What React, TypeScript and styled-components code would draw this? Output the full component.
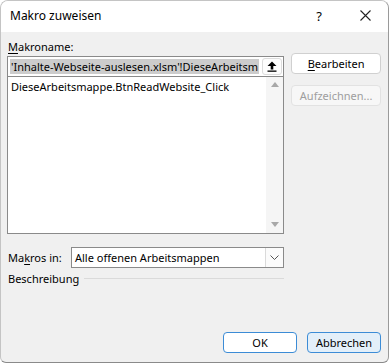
import React from "react";
import styled, { createGlobalStyle } from "styled-components";

const Global = createGlobalStyle`
  html, body { margin: 0; padding: 0; background: #ffffff; }
  body { font-family: "Noto Sans", "Open Sans", sans-serif; font-size: 11px; color: #000; }
  * { box-sizing: border-box; }
`;

const Window = styled.div`
  width: 389px;
  height: 363px;
  display: flex;
  flex-direction: column;
  background: #f0f0f0;
  border: 1px solid #c4c4c4;
  border-right-color: #9a9a9a;
  border-bottom-color: #8a8a8a;
  border-radius: 8px 8px 6px 6px;
  overflow: hidden;
`;

const TitleBar = styled.div`
  height: 31px;
  flex: none;
  display: flex;
  align-items: center;
  background: #ffffff;
  padding-left: 9px;
`;

const Title = styled.div`
  flex: 1;
  font-size: 12px;
  margin-top: -2px;
`;

const TitleButton = styled.div`
  width: 46px;
  height: 31px;
  display: flex;
  align-items: center;
  justify-content: center;
  font-size: 13px;
  margin-top: -2px;
`;

const Body = styled.div`
  flex: 1;
  display: flex;
  flex-direction: column;
  padding: 7px 7px 9px 6px;
`;

const Main = styled.div`
  display: flex;
  gap: 7px;
`;

const LeftCol = styled.div`
  width: 278px;
  display: flex;
  flex-direction: column;
`;

const Mnemonic = styled.span`
  display: inline-block;
  &::first-letter {
    text-decoration: underline;
    text-underline-offset: 2px;
  }
`;

const Label = styled.div`
  height: 16px;
  line-height: 16px;
  padding-left: 1px;
`;

const U = styled.span`
  text-decoration: underline;
  text-underline-offset: 2px;
`;

const NameField = styled.div`
  height: 20px;
  margin-top: 1px;
  display: flex;
  align-items: center;
  background: #ffffff;
  border: 1px solid #8a8a8a;
  border-bottom: none;
  padding: 1px 1px 1px 2px;
`;

const Selected = styled.div`
  flex: 1;
  white-space: nowrap;
  height: 16px;
  line-height: 16px;
`;

const Highlight = styled.span`
  background: #cccccc;
  padding: 0 1px;
`;

const SmallButton = styled.div`
  width: 20px;
  height: 17px;
  display: flex;
  align-items: center;
  justify-content: center;
  border: 1px solid #dcdcdc;
  border-radius: 3px;
  background: #fdfdfd;
`;

const ListBox = styled.div`
  height: 158px;
  display: flex;
  background: #ffffff;
  border: 1px solid #8a8a8a;
`;

const ListItems = styled.div`
  flex: 1;
  padding: 2px 3px;
  line-height: 16px;
`;

const ScrollBar = styled.div`
  width: 17px;
  display: flex;
  flex-direction: column;
  justify-content: space-between;
  align-items: center;
  background: #f5f5f5;
  padding: 5px 0 6px;
`;

const Arrow = styled.div<{ $down?: boolean }>`
  width: 0;
  height: 0;
  border-left: 4px solid transparent;
  border-right: 4px solid transparent;
  ${(p) =>
    p.$down
      ? "border-top: 5px solid #a8a8a8;"
      : "border-bottom: 5px solid #a8a8a8;"}
`;

const SelectRow = styled.div`
  display: flex;
  align-items: center;
  margin-top: 13px;
  height: 21px;
`;

const SelectLabel = styled.div`
  width: 64px;
  padding-left: 1px;
`;

const Select = styled.div`
  flex: 1;
  height: 21px;
  display: flex;
  align-items: center;
  background: #ffffff;
  border: 1px solid #8a8a8a;
  padding-left: 3px;
`;

const SelectText = styled.div`
  flex: 1;
`;

const DropButton = styled.div`
  width: 18px;
  height: 19px;
  display: flex;
  align-items: center;
  justify-content: center;
  border-left: 1px solid #dadada;
  background: #fbfbfb;
`;

const GroupRow = styled.div`
  display: flex;
  align-items: center;
  gap: 5px;
  margin-top: 2px;
  height: 16px;
  padding-left: 1px;
`;

const GroupLine = styled.div`
  flex: 1;
  height: 1px;
  background: #dadada;
`;

const RightCol = styled.div`
  width: 90px;
  display: flex;
  flex-direction: column;
  gap: 11px;
  padding-top: 14px;
`;

const Button = styled.div<{ $disabled?: boolean; $primary?: boolean; $focus?: boolean }>`
  height: 21px;
  display: flex;
  align-items: center;
  justify-content: center;
  white-space: nowrap;
  border-radius: 4px;
  border: 1px solid ${(p) => (p.$primary || p.$focus ? "#3c8cd6" : p.$disabled ? "#e2e2e2" : "#d0d0d0")};
  background: ${(p) => (p.$primary ? "#e3eff9" : p.$disabled ? "#f7f7f7" : "#ffffff")};
  color: ${(p) => (p.$disabled ? "#9e9e9e" : "#000")};
`;

const Spacer = styled.div`
  flex: 1;
`;

const Footer = styled.div`
  display: flex;
  justify-content: flex-end;
  gap: 10px;
`;

const FooterButton = styled(Button)`
  width: 74px;
`;

export default function App() {
  return (
    <>
      <Global />
      <Window>
        <TitleBar>
          <Title>Makro zuweisen</Title>
          <TitleButton>?</TitleButton>
          <TitleButton>
            <svg width="11" height="11" viewBox="0 0 11 11">
              <path d="M0.5 0.5 L10.5 10.5 M10.5 0.5 L0.5 10.5" stroke="#222" strokeWidth="1.1" />
            </svg>
          </TitleButton>
        </TitleBar>
        <Body>
          <Main>
            <LeftCol>
              <Label>
                <Mnemonic>Makroname:</Mnemonic>
              </Label>
              <NameField>
                <Selected>
                  <Highlight>'Inhalte-Webseite-auslesen.xlsm'!DieseArbeitsm</Highlight>
                </Selected>
                <SmallButton>
                  <svg width="10" height="11" viewBox="0 0 10 11">
                    <path d="M5 0.5 L9.5 5 H6.3 V8.5 H3.7 V5 H0.5 Z" fill="#000" />
                    <rect x="0.5" y="9.5" width="9" height="1.3" fill="#000" />
                  </svg>
                </SmallButton>
              </NameField>
              <ListBox>
                <ListItems>DieseArbeitsmappe.BtnReadWebsite_Click</ListItems>
                <ScrollBar>
                  <Arrow />
                  <Arrow $down />
                </ScrollBar>
              </ListBox>
              <SelectRow>
                <SelectLabel>
                  Ma<U>k</U>ros in:
                </SelectLabel>
                <Select>
                  <SelectText>Alle offenen Arbeitsmappen</SelectText>
                  <DropButton>
                    <svg width="9" height="5" viewBox="0 0 9 5">
                      <path d="M0.5 0.5 L4.5 4.5 L8.5 0.5" stroke="#555" fill="none" strokeWidth="1" />
                    </svg>
                  </DropButton>
                </Select>
              </SelectRow>
              <GroupRow>
                <span>Beschreibung</span>
                <GroupLine />
              </GroupRow>
            </LeftCol>
            <RightCol>
              <Button>
                <Mnemonic>Bearbeiten</Mnemonic>
              </Button>
              <Button $disabled>Aufzeichnen...</Button>
            </RightCol>
          </Main>
          <Spacer />
          <Footer>
            <FooterButton $focus>OK</FooterButton>
            <FooterButton $primary>Abbrechen</FooterButton>
          </Footer>
        </Body>
      </Window>
    </>
  );
}
